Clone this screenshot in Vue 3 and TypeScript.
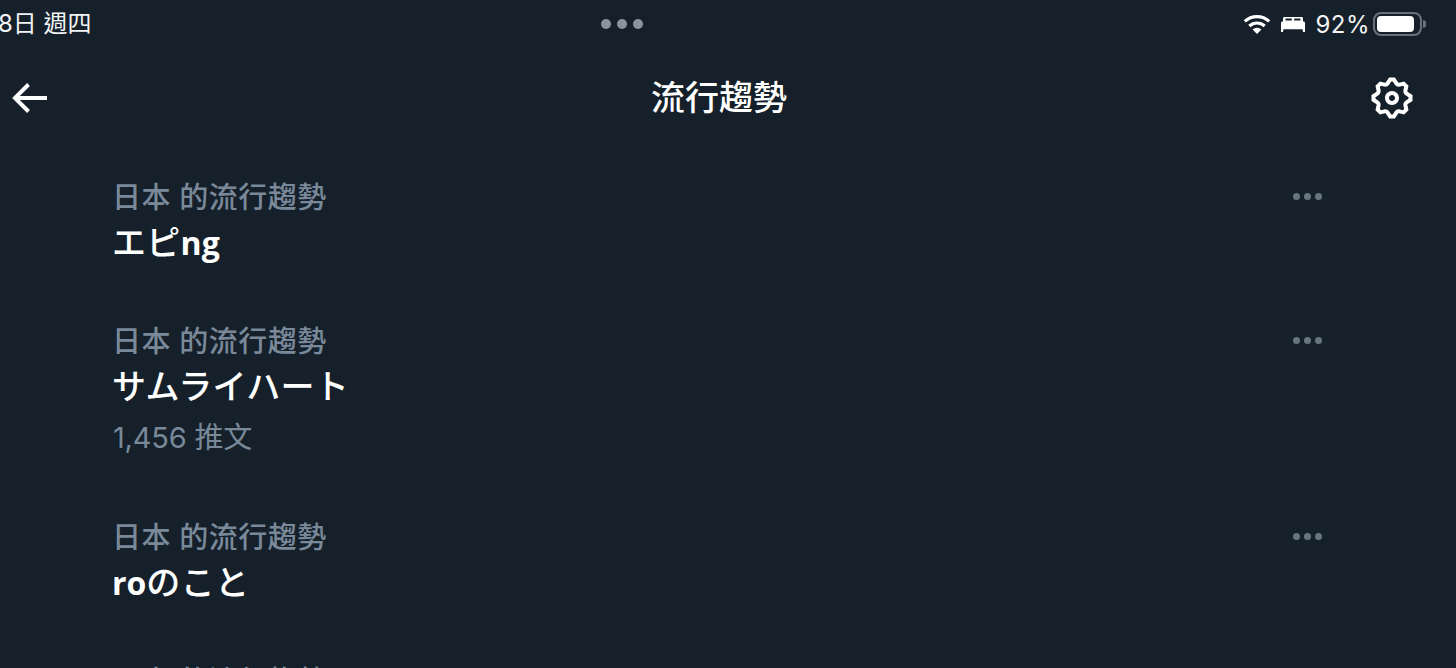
<script setup lang="ts">
interface Part { text: string; latin: boolean }
interface Trend { label: string; name?: string; count?: string }

const trends: Trend[] = [
  { label: '日本 的流行趨勢', name: 'エピng' },
  { label: '日本 的流行趨勢', name: 'サムライハート', count: '1,456 推文' },
  { label: '日本 的流行趨勢', name: 'roのこと' },
  { label: '日本 的流行趨勢' },
]

function parts(name: string): Part[] {
  return (name.match(/[A-Za-z]+|[^A-Za-z]+/g) ?? []).map((text) => ({
    text,
    latin: /^[A-Za-z]/.test(text),
  }))
}
</script>

<template>
  <div class="screen">
    <div class="status">
      <span class="date">8日 週四</span>
      <div class="dots"><i></i><i></i><i></i></div>
      <div class="status-right">
        <svg class="wifi" width="28" height="20" viewBox="0 0 28 20">
          <path d="M1.800 7.400A18 18 0 0 1 26.200 7.400" fill="none" stroke="#fff" stroke-width="3.200" />
          <path d="M6.300 12A11.400 11.400 0 0 1 21.700 12" fill="none" stroke="#fff" stroke-width="3.200" />
          <path d="M9.600 15.400A6.500 6.500 0 0 1 18.400 15.400L14 20z" fill="#fff" />
        </svg>
        <svg class="bed" width="24" height="15" viewBox="0 0 24 15" fill="#fff">
          <path d="M2 1.500C2 .6 2.600 0 3.500 0h17C21.400 0 22 .6 22 1.500V5H2V1.500zM4.500 1.500V3.400h6.300V1.500H4.500zM13.200 1.500V3.400h6.300V1.500h-6.300z" fill-rule="evenodd" />
          <path d="M1.500 4.500h21C23.400 4.500 24 5.100 24 6v6.200H0V6C0 5.100.6 4.500 1.500 4.500zM0 12h2.500L2 15H0v-3zM21.500 12H24v3h-2l-.5-3z" />
        </svg>
        <span class="pct">92%</span>
        <div class="battery"><div class="charge"></div></div>
        <div class="nub"></div>
      </div>
    </div>

    <header class="nav">
      <svg class="back" width="48" height="48" viewBox="0 0 24 24" fill="#fff">
        <path d="M7.414 13l5.043 5.040-1.414 1.420L3.586 12l7.457-7.460 1.414 1.420L7.414 11H21v2H7.414z" />
      </svg>
      <h1 class="title">流行趨勢</h1>
      <svg class="gear" width="48" height="48" viewBox="0 0 24 24" fill="#fff">
        <path d="M10.540 1.750h2.920l1.570 2.360c.11.170.320.250.530.210l2.530-.590 2.170 2.170-.580 2.540c-.050.200.040.410.210.530l2.360 1.570v2.920l-2.360 1.570c-.170.120-.260.330-.210.530l.580 2.540-2.170 2.170-2.530-.590c-.210-.040-.420.040-.530.210l-1.570 2.360h-2.920l-1.580-2.360c-.110-.170-.320-.250-.520-.210l-2.540.590-2.170-2.170.580-2.540c.050-.200-.030-.410-.210-.530l-2.350-1.570v-2.920L4.100 8.970c.180-.120.260-.330.210-.530L3.730 5.900 5.900 3.730l2.540.590c.200.040.410-.040.520-.210l1.580-2.360zm1.070 2l-.980 1.470C10.050 6.080 9 6.500 7.990 6.270l-1.460-.340-.600.600.330 1.460c.240 1.010-.180 2.070-1.050 2.640l-1.460.980v.780l1.460.980c.870.570 1.290 1.630 1.050 2.640l-.330 1.460.600.600 1.460-.340c1.010-.230 2.060.190 2.640 1.050l.980 1.470h.780l.970-1.470c.580-.860 1.630-1.280 2.650-1.050l1.450.340.610-.600-.340-1.460c-.230-1.010.180-2.070 1.050-2.640l1.470-.980v-.780l-1.470-.980c-.870-.570-1.280-1.630-1.050-2.640l.340-1.460-.610-.600-1.450.340c-1.020.230-2.070-.190-2.650-1.050l-.970-1.470h-.780zM12 10.500c-.830 0-1.500.670-1.500 1.500s.670 1.500 1.500 1.500c.820 0 1.500-.670 1.500-1.500s-.680-1.500-1.500-1.500zM8.500 12c0-1.930 1.560-3.500 3.500-3.500 1.930 0 3.500 1.570 3.500 3.500s-1.570 3.500-3.500 3.500c-1.940 0-3.500-1.570-3.500-3.500z" />
      </svg>
    </header>

    <ul class="list">
      <li v-for="(t, i) in trends" :key="i" class="row">
        <div class="text">
          <div class="label">{{ t.label }}</div>
          <div v-if="t.name" class="name">
            <span
              v-for="(p, j) in parts(t.name)"
              :key="j"
              :class="{ latin: p.latin }"
            >{{ p.text }}</span>
          </div>
          <div v-if="t.count" class="count">{{ t.count }}</div>
        </div>
        <div class="more"><i></i><i></i><i></i></div>
      </li>
    </ul>
  </div>
</template>

<style>
html, body { margin: 0; background: #15202b; overflow: hidden; }
</style>

<style scoped>
.screen {
  width: 1456px;
  height: 668px;
  overflow: hidden;
  background: #15202b;
  color: #fff;
  font-family: Inter, "Noto Sans CJK TC", sans-serif;
}
.status {
  height: 48px;
  display: flex;
  align-items: center;
  justify-content: space-between;
  position: relative;
}
.date {
  font-size: 24px;
  line-height: 48px;
  margin-left: -2px;
  color: #f2f4f5;
  white-space: nowrap;
}
.dots {
  position: absolute;
  left: 601px;
  top: 19px;
  display: flex;
  gap: 6px;
}
.dots i {
  width: 10px;
  height: 10px;
  border-radius: 50%;
  background: #8a949e;
}
.status-right {
  display: flex;
  align-items: center;
  margin-right: 30px;
}
.wifi { margin-right: 10px; }
.bed { margin-right: 10px; margin-top: 1px; }
.pct {
  font-size: 24px;
  letter-spacing: 0.5px;
  color: #f2f4f5;
  margin-right: 3px;
}
.battery {
  width: 49px;
  height: 24px;
  box-sizing: border-box;
  border: 2px solid #66717c;
  border-radius: 8px;
  padding: 2px;
}
.charge {
  width: 37px;
  height: 16px;
  background: #fff;
  border-radius: 4px;
}
.nub {
  width: 3px;
  height: 8px;
  margin-left: 1px;
  background: #66717c;
  border-radius: 0 3px 3px 0;
}
.nav {
  height: 100px;
  display: flex;
  align-items: center;
  justify-content: space-between;
  padding: 0 40px 0 5px;
}
.title {
  margin: 0 0 0 17px;
  font-size: 34px;
  font-weight: 500;
  line-height: 44px;
  white-space: nowrap;
}
.list {
  list-style: none;
  margin: 0;
  padding: 0 134px 0 112px;
}
.row {
  display: flex;
  justify-content: space-between;
  align-items: flex-start;
  padding: 30px 0 25px;
}
.label {
  font-size: 29px;
  font-weight: 500;
  line-height: 40px;
  letter-spacing: 0.5px;
  color: #7a8999;
}
.name {
  margin-top: 1px;
  font-size: 34px;
  font-weight: 500;
  line-height: 48px;
  letter-spacing: 0.3px;
  white-space: nowrap;
}
.latin {
  font-family: "Open Sans", sans-serif;
  font-size: 32px;
  font-weight: 700;
  letter-spacing: 0;
}
.count {
  margin-top: 2px;
  margin-left: 1px;
  font-size: 29px;
  line-height: 50px;
  letter-spacing: -0.2px;
  color: #7a8999;
}
.more {
  display: flex;
  gap: 4px;
  margin-top: 15px;
}
.more i {
  width: 7px;
  height: 7px;
  border-radius: 50%;
  background: #66757f;
}
</style>
